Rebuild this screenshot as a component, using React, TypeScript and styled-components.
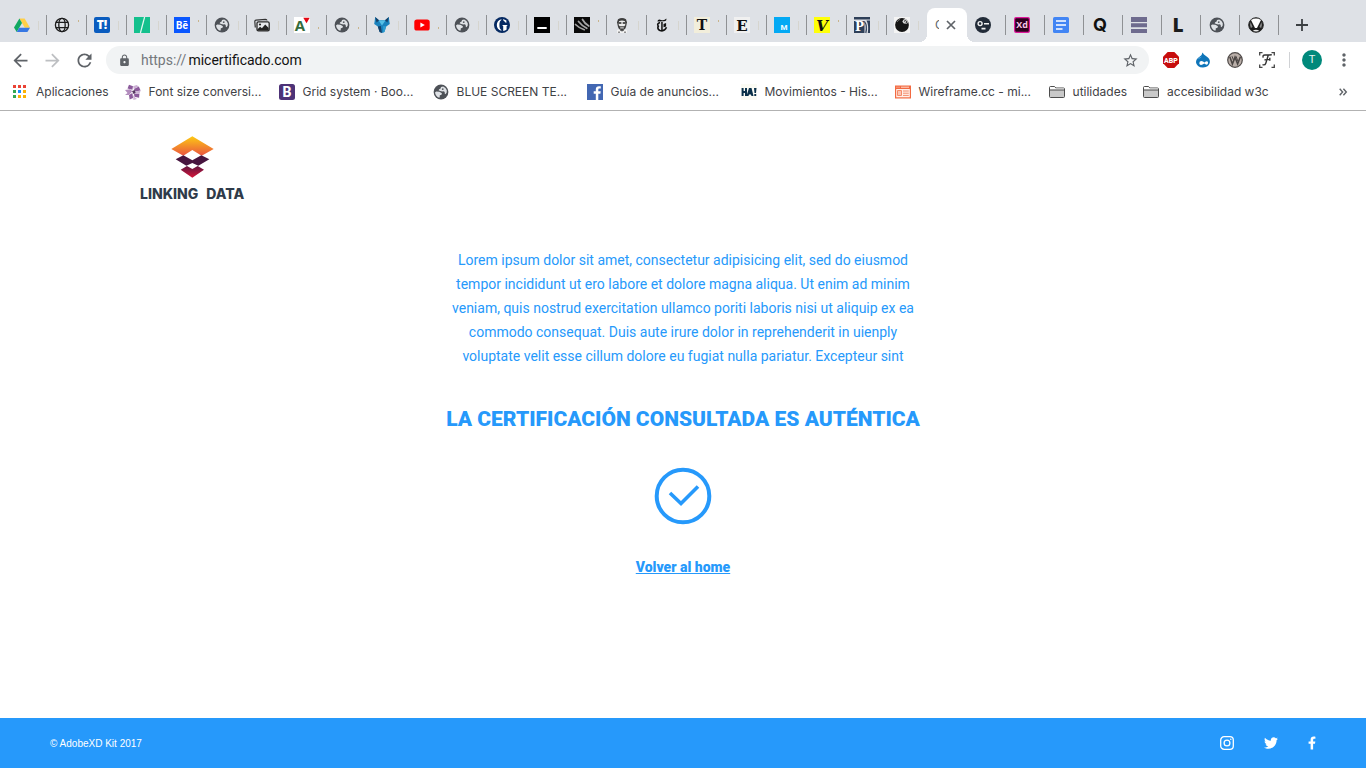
import React from "react";
import styled, { createGlobalStyle, css } from "styled-components";
import {
  MdArrowBack,
  MdArrowForward,
  MdRefresh,
  MdLock,
  MdStarBorder,
  MdMoreVert,
} from "react-icons/md";
import { FaFacebookF, FaTwitter } from "react-icons/fa";

const BLUE = "#2699fb";
const UI_FONT = `Inter, Roboto, "Liberation Sans", sans-serif`;

const GlobalStyle = createGlobalStyle`
  *, *::before, *::after { box-sizing: border-box; }
  body { margin: 0; background: #fff; font-family: Roboto, "Liberation Sans", sans-serif; }
  button { border: 0; padding: 0; background: none; font: inherit; color: inherit; cursor: pointer; }
  a { color: inherit; text-decoration: none; }
  svg { display: block; flex: none; overflow: visible; }
`;

const Page = styled.div`
  display: flex;
  flex-direction: column;
  min-height: 100vh;
`;

/* ---------- Tab strip ---------- */

const TabStrip = styled.nav`
  display: flex;
  height: 42px;
  padding: 8px 0 0 7px;
  background: #dee1e6;
  overflow: hidden;
`;

const Tab = styled.button<{ $narrow?: boolean; $last?: boolean }>`
  flex: 0 1 ${(p) => (p.$narrow ? 39 : 40)}px;
  min-width: 0;
  display: flex;
  align-items: center;
  height: 34px;
  padding-left: ${(p) => (p.$narrow ? 8 : 7)}px;
  background: ${(p) =>
    p.$last
      ? "none"
      : "linear-gradient(#8f9194, #8f9194) right 7px / 1px 20px no-repeat"};
`;

const Sliver = styled.span<{ $kind: string }>`
  width: 1px;
  margin-left: 8px;
  ${(p) =>
    p.$kind === "tall"
      ? css`
          height: 9px;
          background: #d6d5cf;
        `
      : css`
          height: 2px;
          background: #c9b48c;
          margin-top: ${p.$kind === "high" ? "-8px" : "6px"};
        `}
`;

const ActiveTab = styled.button`
  position: relative;
  flex: 0 0 40px;
  display: flex;
  align-items: center;
  gap: 7px;
  height: 34px;
  padding-left: 8px;
  border-radius: 8px 8px 0 0;
  background: #fff;
  color: #5f6368;
  &::before,
  &::after {
    content: "";
    position: absolute;
    bottom: 0;
    width: 8px;
    height: 8px;
  }
  &::before {
    right: 100%;
    background: radial-gradient(circle at 0 0, transparent 8px, #fff 8px);
  }
  &::after {
    left: 100%;
    background: radial-gradient(circle at 100% 0, transparent 8px, #fff 8px);
  }
`;

const TabTitle = styled.span`
  width: 4px;
  overflow: hidden;
  font: 12px/16px ${UI_FONT};
  color: #5f6368;
`;

const NewTab = styled.button`
  display: flex;
  align-items: center;
  margin-left: 15px;
  color: #3c4043;
`;

/* ---------- Toolbar ---------- */

const Toolbar = styled.div`
  display: flex;
  align-items: center;
  height: 36px;
  padding: 0 6px 0 4px;
`;

const ToolButton = styled.button<{ $color?: string }>`
  flex: 0 0 32px;
  height: 32px;
  display: flex;
  align-items: center;
  justify-content: center;
  color: ${(p) => p.$color || "#5f6368"};
`;

const Omnibox = styled.label`
  flex: 1;
  min-width: 0;
  display: flex;
  align-items: center;
  height: 28px;
  margin: 0 6px;
  padding: 0 10px 0 12px;
  border-radius: 14px;
  background: #f1f3f4;
  color: #5f6368;
  font: 14px/20px Roboto, sans-serif;
`;

const Protocol = styled.span`
  margin-left: 10px;
  color: #74787c;
`;

const UrlInput = styled.input`
  flex: 1;
  min-width: 0;
  padding: 0 0 0 2px;
  border: 0;
  outline: 0;
  background: none;
  font: inherit;
  color: #111;
`;

const Divider = styled.span`
  width: 1px;
  height: 16px;
  margin: 0 12px 0 6px;
  background: #d0d2d5;
`;

const Avatar = styled.button`
  width: 20px;
  height: 20px;
  margin-right: 6px;
  border-radius: 50%;
  background: #00897b;
  color: #e4f3f1;
  font: 11px/20px Roboto, sans-serif;
`;

/* ---------- Bookmarks ---------- */

const BookmarkBar = styled.nav`
  display: flex;
  align-items: center;
  gap: 16px;
  height: 33px;
  padding: 0 19px 4px 12px;
  border-bottom: 1px solid #b2b2b2;
  overflow: hidden;
`;

const Bookmark = styled.a<{ $fixed?: boolean }>`
  flex: none;
  display: flex;
  align-items: center;
  gap: 8px;
  width: ${(p) => (p.$fixed ? "138px" : "auto")};
  color: #3f4246;
  font: 12px/16px ${UI_FONT};
  white-space: nowrap;
`;

const More = styled.button`
  margin-left: auto;
`;

/* ---------- Page content ---------- */

const Header = styled.header`
  display: flex;
  padding: 25px 140px 0;
`;

const Brand = styled.a`
  display: flex;
  flex-direction: column;
  align-items: center;
  gap: 8px;
`;

const Wordmark = styled.span`
  display: flex;
  gap: 8px;
  color: #2f3b4a;
  font: 800 14px/16px Inter, sans-serif;
`;

const Main = styled.main`
  flex: 1;
  display: flex;
  flex-direction: column;
  align-items: center;
  padding: 46px 24px;
  color: ${BLUE};
  text-align: center;
`;

const Intro = styled.p`
  max-width: 470px;
  margin: 0;
  font-size: 14px;
  line-height: 24px;
`;

const Result = styled.h1`
  margin: 37px 0 34px;
  font-size: 21px;
  line-height: 28px;
  font-weight: 900;
`;

const HomeLink = styled.a`
  margin-top: 34px;
  font-size: 14px;
  line-height: 16px;
  font-weight: 900;
  text-decoration: underline;
`;

const Footer = styled.footer`
  display: flex;
  align-items: center;
  justify-content: space-between;
  height: 50px;
  padding: 0 50px;
  background: ${BLUE};
  color: #fff;
  font: 10px/12px "Liberation Sans", Arial, sans-serif;
`;

const Copyright = styled.span`
  padding-top: 1px;
`;

const Social = styled.div`
  display: flex;
  align-items: center;
  gap: 30px;
`;

const FacebookIcon = styled(FaFacebookF)`
  width: 8px;
`;

/* ---------- Icons ---------- */

const Icon = ({ children, size = 16 }: { children: React.ReactNode; size?: number }) => (
  <svg width={size} height={size} viewBox="0 0 16 16" aria-hidden="true">
    {children}
  </svg>
);

type LetterProps = {
  text: string;
  bg?: string;
  color: string;
  size: number;
  family?: string;
  weight?: number;
  radius?: number;
  x?: number;
  y?: number;
  italic?: boolean;
};

const Letter = ({ text, bg = "none", color, size, family = "Roboto", weight = 700, radius = 0, x = 8, y = 12, italic }: LetterProps) => (
  <Icon>
    <rect width="16" height="16" rx={radius} fill={bg} />
    <text x={x} y={y} fontSize={size} fontFamily={`${family}, sans-serif`} fontWeight={weight} fontStyle={italic ? "italic" : "normal"} fill={color} textAnchor="middle">
      {text}
    </text>
  </Icon>
);

const Close = () => (
  <svg width="10" height="10" viewBox="0 0 10 10" aria-hidden="true">
    <path d="M1 1l8 8M9 1L1 9" stroke="#5f6368" strokeWidth="1.700" />
  </svg>
);

const Plus = () => (
  <Icon>
    <path d="M8 2v12M2 8h12" stroke="#3c4043" strokeWidth="1.800" />
  </Icon>
);

const Globe = () => (
  <Icon>
    <circle cx="8" cy="8" r="7.4" fill="#4d5157" />
    <path d="M2 8.6L3.200 7.600 6.400 7.700 8.600 8.900 9 10 8 11 6.800 11.300 6.700 13 6.200 13.800Q2.600 12.600 2 8.600z" fill="#dfe2e6" />
    <path d="M7.200 6.900L5.600 6.300 6.200 5.200 7.600 4.600 8 3.100 10.200 2.500Q12.900 3.600 13.800 6.200L13.700 8.600 12.600 10.300 11.600 9.200 11.800 7.900 10.600 7.300 9.300 7.600z" fill="#dfe2e6" />
    <path d="M9.200 4.200l1.600.5-.6 1.200-1.400-.1z" fill="#4d5157" />
  </Icon>
);

const Drive = () => (
  <Icon>
    <path d="M5.400 1.500h5.200L16 10.700h-5.200z" fill="#ffcf48" />
    <path d="M5.400 1.500L8 6 2.700 15 0 10.500z" fill="#11a861" />
    <path d="M5.200 10.700H16L13.400 15H2.700z" fill="#3777e3" />
  </Icon>
);

const WireGlobe = () => (
  <Icon>
    <g fill="none" stroke="#1b1b1b" strokeWidth="1.300">
      <circle cx="8" cy="8" r="6.600" />
      <ellipse cx="8" cy="8" rx="3.200" ry="6.600" />
      <path d="M1.800 5.300h12.400M1.800 10.700h12.400" />
    </g>
  </Icon>
);

const Slash = () => (
  <Icon>
    <path d="M0 0h16v16H0z" fill="#14c08d" />
    <path d="M10.600 0L6.400 16" stroke="#e6f7f1" strokeWidth="1.200" />
  </Icon>
);

const Photos = () => (
  <Icon>
    <path d="M1.300 10.500L.8 4.500Q.8 3.200 2 3.100L11.500 2.300Q12.800 2.300 13 3.500" fill="none" stroke="#333" strokeWidth="1.200" />
    <rect x="3" y="4.800" width="12.200" height="9" rx="1.400" fill="#e7e9ec" stroke="#2a2a2a" strokeWidth="1.300" />
    <path d="M3.500 12.300l2.600-2.600 1.800 1.600 3.300-3.700 3.500 3.400v2.500H3.500z" fill="#222" />
    <circle cx="6" cy="7.500" r="1.100" fill="#222" />
  </Icon>
);

const AMark = () => (
  <Icon>
    <path d="M0 0h16v16H0z" fill="#fff" />
    <text x="6" y="13.500" fontSize="15" fontFamily="Open Sans, sans-serif" fontWeight="700" fill="#356b3c" textAnchor="middle">A</text>
    <path d="M9.300.8h6.400l-3.200 5.400z" fill="#e30613" />
  </Icon>
);

const Wolf = () => (
  <Icon>
    <path d="M1.200 0L5 3.200h6L14.800 0l.6 4.600L15.800 7l-3.600 2.500L10.400 15 8 16 5.600 15 3.800 9.500.2 7l.4-2.400z" fill="#1a82bd" />
    <path d="M4.600 3.600h6.800L8 8.600z" fill="#56bfe6" />
    <path d="M1.200 0L5 3.200 2.600 5.600zM14.800 0L11 3.200l2.400 2.400zM3.800 9.500l3-.4L8 16l-2.400-1z" fill="#173f66" />
    <path d="M9.200 9l3 .5-1.800 5.500-1.200.4z" fill="#2f9fd2" />
  </Icon>
);

const YouTube = () => (
  <Icon>
    <rect x=".3" y="2.400" width="15.400" height="11.200" rx="2.600" fill="#f00" />
    <path d="M6.400 5.400v5.200L10.800 8z" fill="#fff" />
  </Icon>
);

const Guardian = () => (
  <Icon>
    <circle cx="8" cy="8" r="8" fill="#052962" />
    <path d="M7.400 2.200C4.500 2.800 2.800 5 2.800 8s1.700 5.200 4.600 5.800V13C6 12.400 5.400 10.600 5.400 8S6 3.600 7.400 3zM9 2.200c1.200.1 2.400.6 3.400 1.200v2.400h-.6L9 3zM8.400 8.500V8h5v.5l-.8.4v3.600c-.8.7-2 1.200-3.400 1.400V8.900z" fill="#fff" />
  </Icon>
);

const Dash = () => (
  <Icon>
    <path d="M0 0h16v16H0z" fill="#000" />
    <path d="M3.300 10h9.400v2H3.300z" fill="#fff" />
  </Icon>
);

const Claw = () => (
  <Icon>
    <path d="M0 0h16v16H0z" fill="#0a0a0a" />
    <g fill="none" stroke="#a4a4a4" strokeWidth="1.700" strokeLinecap="round">
      <path d="M8.500 2.500c1.500 3 3.500 4.800 6.300 6.500" />
      <path d="M4.500 4.500c2.300 3 5 5 8.300 6.800" />
      <path d="M1.500 7.500c2.500 2.500 5.500 4.200 8.800 5.200" />
    </g>
  </Icon>
);

const Portrait = () => (
  <Icon>
    <path d="M4 10L3 5.200 4 2.300Q8-.5 12 2.300l1 3L12 10l-1.500 3H5.500z" fill="#3e3e3e" />
    <path d="M5 4.200q3-1.300 6 0l.3 3.800-1 1.300H5.700L4.700 8z" fill="#ececec" />
    <path d="M5 6h2.400M8.700 6H11" stroke="#222" strokeWidth="1.600" />
    <path d="M6.200 10.900h3.600" stroke="#eee" />
    <path d="M3 13l3-.8 2 2 2-2 3 .8v3H3z" fill="#f1f1f1" />
    <path d="M6 12.800l2 1.200 2-1.200M5 16v-1.500M11 16v-1.500" stroke="#333" fill="none" />
  </Icon>
);

const Times = () => (
  <Icon>
    <path d="M3.400 4.600Q3.800 1.800 7 2.900t5.300-1.300Q13 4.300 10 4.300T3.400 4.600z" fill="#111" />
    <path d="M6 5.600Q3 6.600 3.900 8.300 5 9 3.900 9.800 3.500 12.500 6 13.600 10.500 15 12.500 10.300" fill="none" stroke="#111" strokeWidth="1.600" />
    <path d="M7.200 5h1.500v8H7.200zM9.500 7l2.600-1v3.500l-2.600.8z" fill="#111" />
  </Icon>
);

const PJ = () => (
  <Icon>
    <path d="M0 0h16v2.500H0zM0 4h10.500v12H0zM12.500 3.500H16V16h-2.200Q15 8 12.500 3.500z" fill="#2e3f58" />
    <path d="M10.500 4.500q3 4 1.300 11.500" stroke="#2e3f58" fill="none" strokeWidth="1.200" />
    <text x="5.500" y="13.500" fontSize="12" fontFamily="DejaVu Serif, serif" fontWeight="700" fill="#fff" textAnchor="middle">P</text>
  </Icon>
);

const Ball = () => (
  <Icon>
    <path d="M0 0h16v16H0z" fill="#f4f4f4" />
    <circle cx="8" cy="8" r="6.900" fill="#151515" />
    <path d="M8.300 4.600Q9.500 1 12 2.200 15 4.600 13.400 6.300 9.500 8 8.300 4.600z" fill="#d8d8d8" />
    <path d="M10 4.300q1.600-1.400 2.600 0t-1 1.600" stroke="#222" fill="none" />
    <path d="M3 5q1-2 3-2.600" stroke="#777" fill="none" />
  </Icon>
);

const Face = () => (
  <Icon>
    <circle cx="8" cy="8" r="8" fill="#222b38" />
    <circle cx="5.100" cy="6.600" r="2" fill="none" stroke="#f2f2f2" strokeWidth="1.400" />
    <path d="M9 6.700h5M6.500 11.600h4" stroke="#f2f2f2" strokeWidth="1.600" />
  </Icon>
);

const Xd = () => (
  <Icon>
    <rect x=".6" y=".6" width="14.800" height="14.800" rx="1.600" fill="#2e001e" stroke="#e0199c" strokeWidth="1.200" />
    <text x="8" y="11.200" fontSize="9" fontFamily="Open Sans, sans-serif" fontWeight="700" fill="#f6c6e6" textAnchor="middle">Xd</text>
  </Icon>
);

const Docs = () => (
  <Icon>
    <rect width="16" height="16" rx="1.600" fill="#4285f4" />
    <path d="M3 4h10M3 8h10M3 12h6.500" stroke="#fff" strokeWidth="1.700" />
  </Icon>
);

const Stripes = () => (
  <Icon>
    <path d="M0 0h16v5H0zM0 6.300h16v4H0zM0 12h16v4H0z" fill="#6e6b8e" />
  </Icon>
);

const VMark = () => (
  <Icon>
    <circle cx="8" cy="8" r="7.300" fill="#1d1d1d" stroke="#2b2b2b" />
    <path d="M3 3Q8 .2 13 3L9 11H7z" fill="#fff" />
    <path d="M4.800 13.400Q8 12 11.200 13.400 8 15.400 4.800 13.400z" fill="#e8e8e8" />
    <path d="M2.600 5Q1.400 8 2.800 11L4.600 10zM13.400 5q1.200 3-.2 6l-1.800-1z" fill="#888" />
  </Icon>
);

const Apps = () => (
  <svg width="16" height="16" viewBox="0 0 16 16" aria-hidden="true">
    <path d="M1 1h3v3H1zM6 1h3v3H6zM11 1h3v3h-3z" fill="#ea4335" />
    <path d="M1 6h3v3H1zM1 11h3v3H1z" fill="#34a853" />
    <path d="M6 6h3v3H6z" fill="#1a8cff" />
    <path d="M11 6h3v3h-3zM6 11h3v3H6zM11 11h3v3h-3z" fill="#fbb205" />
  </svg>
);

const Pinwheel = () => (
  <Icon>
    <path d="M4 .8l4 1.400-.6 3.600L2.500 4.500zM8.800 5l5-2.600 1.800 4-5 1zM9 9.400l5.400.6-.3 3.800-4.700-1zM7.400 9l.7 5-3.500 1.500L4 11z" fill="#8b5a9b" />
    <path d="M8 2.200L11.600 1l2.200 1.400L8.800 5zM10.600 7.400l5-1L14.400 10 9 9.400zM8 11l1.400 1.800L12 15l-3.600 1z" fill="#cdb3d5" />
    <path d="M0 6l5-.8 2.400 2L2.500 9zM0 11l2.500-2 4.900-1.800L4 11z" fill="#b28cbd" />
    <path d="M7 7l3-1 .5 3-2 1z" fill="#54365f" />
  </Icon>
);

const Bootstrap = () => <Letter text="B" bg="#4d3277" color="#fff" size={14} radius={2.5} y={13} weight={800} />;

const FacebookTile = () => (
  <Icon>
    <path d="M0 0h16v16H0z" fill="#4267b2" />
    <path d="M8.800 16V9.700H6.700V7.300h2.100V5.500C8.800 3.400 10 2.300 12 2.300h1.800v2.200h-1.200c-1 0-1.300.5-1.300 1.200v1.600h2.400L13.400 9.700h-2.100V16z" fill="#fff" />
  </Icon>
);

const Hai = () => (
  <Icon>
    <path d="M0 0h16v16H0z" fill="#fbfbf4" />
    <path d="M1.600 4v8M5 4v8M1.600 8H5" stroke="#0b3049" strokeWidth="2" />
    <path d="M5.500 12L8 4h2.500L12.500 12h-2l-.6-1.500H8L7.500 12z" fill="#0b3049" />
    <path d="M13 4h2.500l-.5 5h-1.500zM13.300 10h1.900v2h-1.900z" fill="#0b3049" />
  </Icon>
);

const Wireframe = () => (
  <Icon>
    <path d="M0 1.500h16v13H0z" fill="#f26a41" />
    <path d="M1.200 5h13.600v8.300H1.200z" fill="#fff0ea" />
    <path d="M2.500 6.500h4v5h-4zM8 7h5.800M8 9.200h5.800M8 11.400h5.800" fill="#fbc3b0" stroke="#f58a68" />
    <path d="M1.500 3.200h1M3.500 3.200h1M6 3.200h8" stroke="#ffd9cc" />
  </Icon>
);

const Folder = () => (
  <Icon>
    <path d="M.5 12.500v-9q0-1 1-1h4l1.300 1.500h7.700q1 0 1 1v7.500q0 1-1 1h-13q-1 0-1-1z" fill="#c9c9c9" stroke="#4d4d4d" />
    <path d="M1 3h4.500l1 1.600h8.500v1.200H1z" fill="#fff" />
    <path d="M.5 6h15" stroke="#4d4d4d" />
  </Icon>
);

const Abp = () => (
  <Icon>
    <path d="M4.700 0h6.600L16 4.700v6.600L11.300 16H4.700L0 11.300V4.700z" fill="#c70d0d" />
    <text x="8" y="10.600" fontSize="7" fontFamily="Roboto, sans-serif" fontWeight="800" fill="#fff" textAnchor="middle">ABP</text>
  </Icon>
);

const Drop = () => (
  <Icon>
    <path d="M7.500.5Q8.500 2.500 11.300 4.300 15 6.600 14.900 10 14.400 15.300 8 15.500 1.600 15.300 1 10.200.9 7 4.500 4.700 7.300 3 7.500.5z" fill="#0f75b9" />
    <path d="M2.500 7.500Q4 5.200 7 4.600 5 6.500 2.500 7.500z" fill="#5eb1e3" />
    <path d="M4.300 11.200Q4.300 9 6.500 9 8 9.200 9.500 10.500 12 8.200 13 10 13.300 12.500 11.700 12.700 10.300 12.300 9.300 11.600 7.500 13 6 13 4.400 12.800 4.300 11.200z" fill="#fff" />
  </Icon>
);

const WBadge = () => (
  <Icon>
    <circle cx="8" cy="8" r="7.300" fill="#b9aea8" stroke="#4f4a48" strokeWidth="1.200" />
    <path d="M2.800 4.700L5.400 12 8 5.200 10.600 12l2.800-7.300" fill="none" stroke="#4a4543" strokeWidth="1.500" />
    <path d="M5 4.200L6.800 9M9 4.200L10.800 9" stroke="#4a4543" />
  </Icon>
);

const FontBadge = () => (
  <Icon>
    <path d="M.7 3.500V.7h2.800M12.500.7h2.800v2.800M15.300 12.500v2.800h-2.800M3.500 15.300H.7v-2.800" fill="none" stroke="#454545" strokeWidth="1.300" />
    <path d="M4.300 5.600Q3.200 3.100 6 3q3 .2 6.800-.3M9.200 3.200Q8.200 7 6.800 11.200 6 13.500 3.500 12.700M5.500 7.700q2 .4 5.200-.3M10.800 5.800v3" fill="none" stroke="#333" strokeWidth="1.400" />
  </Icon>
);

const Chevrons = () => (
  <svg width="8" height="8" viewBox="0 0 8 8" aria-hidden="true">
    <path d="M.7.8L3.600 4 .7 7.200M4.400.8L7.300 4 4.400 7.200" fill="none" stroke="#5f6368" strokeWidth="1.400" />
  </svg>
);

const BrandMark = () => (
  <svg width="43" height="42" viewBox="123 34 129 126" aria-hidden="true">
    <defs>
      <linearGradient id="sun" x1="0" y1="0" x2="0" y2="1">
        <stop offset="0" stopColor="#fdc913" />
        <stop offset="1" stopColor="#ea5440" />
      </linearGradient>
      <linearGradient id="wine" x1="0" y1="0" x2="0" y2="1">
        <stop offset="0" stopColor="#5e1540" />
        <stop offset="1" stopColor="#d8163a" />
      </linearGradient>
    </defs>
    <path d="M187 35L251 73 215 93 187 76 160 93 124 73z" fill="url(#sun)" />
    <path d="M137 104L160 92 187 107 214 92 238 104 205 123 187 115 169 123z" fill="#47153f" />
    <path d="M152 135L171 124 187 133 203 124 222 135 187 159z" fill="url(#wine)" />
  </svg>
);

const Check = () => (
  <svg width="58" height="58" viewBox="0 0 58 58" fill="none" stroke={BLUE} strokeWidth="4" role="img" aria-label="Auténtica">
    <circle cx="29" cy="29" r="26.300" />
    <path d="M16 26L27 36.500 44 19.500" strokeWidth="3.600" />
  </svg>
);

const Instagram = () => (
  <svg width="14" height="14" viewBox="0 0 14 14" fill="none" stroke="#fff" strokeWidth="1.300" aria-hidden="true">
    <rect x=".7" y=".7" width="12.600" height="12.600" rx="3.400" />
    <circle cx="7" cy="7" r="2.900" />
    <circle cx="10.800" cy="3.200" r=".8" fill="#fff" stroke="none" />
  </svg>
);

/* ---------- Data ---------- */

type TabItem = { name: string; icon: React.ReactNode; sliver?: string };

const leftTabs: TabItem[] = [
  { name: "Drive", icon: <Drive />, sliver: "tall" },
  { name: "Web", icon: <WireGlobe />, sliver: "high" },
  { name: "T!", icon: <Letter text="T!" bg="#0a5cbf" color="#fff" size={12} weight={800} radius={2} family="Open Sans" />, sliver: "tall" },
  { name: "Slash", icon: <Slash />, sliver: "tall" },
  { name: "Behance", icon: <Letter text="Bē" bg="#0a57ff" color="#fff" size={10} />, sliver: "high" },
  { name: "Sitio", icon: <Globe />, sliver: "tall" },
  { name: "Fotos", icon: <Photos />, sliver: "tall" },
  { name: "A", icon: <AMark />, sliver: "low" },
  { name: "Sitio", icon: <Globe />, sliver: "low" },
  { name: "Lobo", icon: <Wolf />, sliver: "tall" },
  { name: "YouTube", icon: <YouTube />, sliver: "low" },
  { name: "Sitio", icon: <Globe />, sliver: "tall" },
  { name: "The Guardian", icon: <Guardian />, sliver: "tall" },
  { name: "Guion", icon: <Dash />, sliver: "tall" },
  { name: "Garra", icon: <Claw />, sliver: "high" },
  { name: "Retrato", icon: <Portrait />, sliver: "tall" },
  { name: "The New York Times", icon: <Times />, sliver: "tall" },
  { name: "T", icon: <Letter text="T" bg="#f2eedb" color="#111" size={14} family="DejaVu Serif" y={13} />, sliver: "high" },
  { name: "E", icon: <Letter text="E" bg="#f0f0f0" color="#111" size={15} family="DejaVu Serif" y={13.5} />, sliver: "tall" },
  { name: "M", icon: <Letter text="M" bg="#03a9f4" color="#e9f8ff" size={8} weight={800} x={10} y={13} />, sliver: "tall" },
  { name: "V", icon: <Letter text="V" bg="#ffff0a" color="#111" size={15} family="DejaVu Serif" y={13.5} italic />, sliver: "high" },
  { name: "PJ", icon: <PJ />, sliver: "tall" },
  { name: "Bola", icon: <Ball />, sliver: "tall" },
];

const rightTabs: TabItem[] = [
  { name: "Cara", icon: <Face /> },
  { name: "Adobe XD", icon: <Xd /> },
  { name: "Docs", icon: <Docs /> },
  { name: "Q", icon: <Letter text="Q" color="#111" size={18} family="Inter" weight={700} y={14} /> },
  { name: "Lista", icon: <Stripes /> },
  { name: "L", icon: <Letter text="L" color="#1c1c1c" size={19} family="Open Sans" weight={800} y={15} /> },
  { name: "Sitio", icon: <Globe /> },
  { name: "V", icon: <VMark /> },
];

const bookmarks = [
  { label: "Aplicaciones", icon: <Apps /> },
  { label: "Font size conversi...", icon: <Pinwheel />, fixed: true },
  { label: "Grid system · Boo...", icon: <Bootstrap />, fixed: true },
  { label: "BLUE SCREEN TE...", icon: <Globe />, fixed: true },
  { label: "Guía de anuncios...", icon: <FacebookTile />, fixed: true },
  { label: "Movimientos - His...", icon: <Hai />, fixed: true },
  { label: "Wireframe.cc - mi...", icon: <Wireframe />, fixed: true },
  { label: "utilidades", icon: <Folder /> },
  { label: "accesibilidad w3c", icon: <Folder /> },
];

export default function App() {
  return (
    <Page>
      <GlobalStyle />
      <TabStrip aria-label="Pestañas">
        {leftTabs.map((t, i) => (
          <Tab key={i} aria-label={t.name} $last={i === leftTabs.length - 1}>
            {t.icon}
            {t.sliver && <Sliver $kind={t.sliver} />}
          </Tab>
        ))}
        <ActiveTab aria-label="Certificado">
          <TabTitle>C</TabTitle>
          <Close />
        </ActiveTab>
        {rightTabs.map((t, i) => (
          <Tab key={i} aria-label={t.name} $narrow>
            {t.icon}
          </Tab>
        ))}
        <NewTab aria-label="Nueva pestaña">
          <Plus />
        </NewTab>
      </TabStrip>

      <Toolbar>
        <ToolButton aria-label="Atrás"><MdArrowBack size={21} /></ToolButton>
        <ToolButton aria-label="Adelante" $color="#bdbfc2"><MdArrowForward size={21} /></ToolButton>
        <ToolButton aria-label="Recargar"><MdRefresh size={21} /></ToolButton>
        <Omnibox>
          <MdLock size={13} />
          <Protocol>https://</Protocol>
          <UrlInput defaultValue="micertificado.com" aria-label="Dirección" />
          <MdStarBorder size={17} />
        </Omnibox>
        <ToolButton aria-label="Adblock Plus"><Abp /></ToolButton>
        <ToolButton aria-label="Drupal"><Drop /></ToolButton>
        <ToolButton aria-label="W"><WBadge /></ToolButton>
        <ToolButton aria-label="Fuentes"><FontBadge /></ToolButton>
        <Divider />
        <Avatar>T</Avatar>
        <ToolButton aria-label="Menú"><MdMoreVert size={20} /></ToolButton>
      </Toolbar>

      <BookmarkBar aria-label="Marcadores">
        {bookmarks.map((b) => (
          <Bookmark key={b.label} href="#" $fixed={b.fixed}>
            {b.icon}
            {b.label}
          </Bookmark>
        ))}
        <More aria-label="Más marcadores"><Chevrons /></More>
      </BookmarkBar>

      <Header>
        <Brand href="#">
          <BrandMark />
          <Wordmark>
            <span>LINKING</span>
            <span>DATA</span>
          </Wordmark>
        </Brand>
      </Header>

      <Main>
        <Intro>
          Lorem ipsum dolor sit amet, consectetur adipisicing elit, sed do eiusmod tempor incididunt ut ero labore et
          dolore magna aliqua. Ut enim ad minim veniam, quis nostrud exercitation ullamco poriti laboris nisi ut aliquip
          ex ea commodo consequat. Duis aute irure dolor in reprehenderit in uienply voluptate velit esse cillum dolore
          eu fugiat nulla pariatur. Excepteur sint
        </Intro>
        <Result>LA CERTIFICACIÓN CONSULTADA ES AUTÉNTICA</Result>
        <Check />
        <HomeLink href="#">Volver al home</HomeLink>
      </Main>

      <Footer>
        <Copyright>© AdobeXD Kit 2017</Copyright>
        <Social>
          <a href="#" aria-label="Instagram"><Instagram /></a>
          <a href="#" aria-label="Twitter"><FaTwitter size={14} /></a>
          <a href="#" aria-label="Facebook"><FacebookIcon size={14} /></a>
        </Social>
      </Footer>
    </Page>
  );
}
